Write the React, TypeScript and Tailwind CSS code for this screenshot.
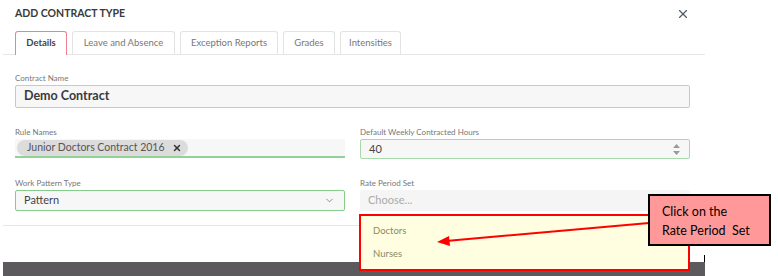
import { X, ChevronDown } from "lucide-react";

const tabs = [
  { name: "Details", w: "w-[52px]", active: true },
  { name: "Leave and Absence", w: "w-[103px]" },
  { name: "Exception Reports", w: "w-[98px]" },
  { name: "Grades", w: "w-[52px]" },
  { name: "Intensities", w: "w-[61px]" },
];

const Label = ({ children }: { children: React.ReactNode }) => (
  <div className="text-[8px] leading-[10px] text-[#777] mb-[2px]">{children}</div>
);

export default function App() {
  return (
    <div className="relative w-[778px] h-[276px] overflow-hidden bg-white font-['Lato',sans-serif]">
      <div className="ml-[3px] w-[702px] h-[276px] flex flex-col">
        {/* header */}
        <div className="h-[31px] px-3 pt-[6px] flex justify-between items-start">
          <h1 className="text-[10.5px] leading-[14px] font-bold text-[#3a3a3a]">
            ADD CONTRACT TYPE
          </h1>
          <X className="mr-[3px] mt-[1px] text-[#4f5a66]" size={14} strokeWidth={2} />
        </div>

        {/* tabs */}
        <div className="h-[24px] px-3 flex gap-[5px] border-b border-[#e6e6e6]">
          {tabs.map((t) => (
            <div
              key={t.name}
              className={`${t.w} h-[24px] flex items-center justify-center rounded-t-[3px] border border-b-0 text-[9.5px] ${
                t.active
                  ? "border-[#f07f90] text-[#444] font-bold bg-white"
                  : "border-[#e3e3e3] text-[#777]"
              }`}
            >
              {t.name}
            </div>
          ))}
        </div>

        {/* body */}
        <div className="px-3 pt-[18px] pr-[15px]">
          <Label>Contract Name</Label>
          <div className="h-[23px] border border-[#acdcaf] bg-[#f7f7f7] rounded-[2px] flex items-center px-2 text-[12.5px] font-bold text-[#3a3a3a]">
            Demo Contract
          </div>

          <div className="grid grid-cols-2 gap-x-[15px] mt-[19px]">
            <div>
              <Label>Rule Names</Label>
              <div className="h-[19px] bg-[#f7f7f7] border-b-2 border-[#93d296] flex items-center pl-[2px]">
                <div className="h-[16px] w-[171px] rounded-full bg-[#dcdcdc] flex items-center pl-[10px] pr-[6px] text-[10.5px] text-[#555]">
                  <span className="flex-1">Junior Doctors Contract 2016</span>
                  <X size={10} strokeWidth={3.5} className="text-[#333]" />
                </div>
              </div>
            </div>
            <div>
              <Label>Default Weekly Contracted Hours</Label>
              <div className="h-[20px] border border-[#a8d9ab] bg-[#f7f7f7] rounded-[2px] flex items-center px-2 text-[11px] text-[#444]">
                <span className="flex-1">40</span>
                <div className="flex flex-col gap-[3px] mr-[1px]">
                  <svg width="7" height="4" viewBox="0 0 7 4"><path d="M3.5 0L7 4H0z" fill="#9a9a9a" /></svg>
                  <svg width="7" height="4" viewBox="0 0 7 4"><path d="M0 0h7L3.5 4z" fill="#9a9a9a" /></svg>
                </div>
              </div>
            </div>

            <div className="mt-[19px]">
              <Label>Work Pattern Type</Label>
              <div className="h-[21px] border border-[#86cc8a] bg-[#f7f7f7] rounded-[2px] flex items-center px-2 text-[11px] text-[#444]">
                <span className="flex-1">Pattern</span>
                <ChevronDown size={11} className="text-[#888] mr-[1px]" />
              </div>
            </div>
            <div className="mt-[19px]">
              <Label>Rate Period Set</Label>
              <div className="h-[21px] bg-[#f5f5f5] rounded-[2px] flex items-center px-2 text-[11px] text-[#aaa]">
                Choose...
              </div>
            </div>
          </div>
        </div>

        {/* footer */}
        <div className="mt-[14px] border-t border-[#e6e6e6] flex-1 flex flex-col justify-end">
          <div className="h-[14px] bg-[#5c5a5c]" />
        </div>
      </div>

      {/* open dropdown */}
      <div className="absolute left-[359px] top-[214px] w-[331px] h-[57px] border-2 border-[#ff0000] bg-[#fffee0] text-[9.5px] text-[#8a8a66] flex flex-col justify-around pl-[12px] py-[4px]">
        <div>Doctors</div>
        <div>Nurses</div>
      </div>

      {/* annotation */}
      <svg className="absolute left-0 top-0" width="778" height="276">
        <line x1="649" y1="223" x2="446" y2="241" stroke="#ff0000" strokeWidth="2" />
        <path d="M437 242L449 236L450 246z" fill="#ff0000" />
        <line x1="704.5" y1="255" x2="704.5" y2="262" stroke="#000" strokeWidth="1" />
      </svg>
      <div className="absolute left-[648px] top-[194px] w-[123px] h-[52px] border-2 border-black bg-[#ff9999] pl-[12px] pt-[6px] text-[12.5px] leading-[19px] text-black whitespace-pre">
        {"Click on the\nRate Period  Set"}
      </div>
    </div>
  );
}
